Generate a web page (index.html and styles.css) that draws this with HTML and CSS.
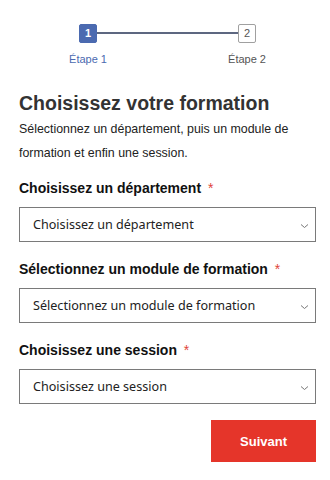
FILE: index.html
```html
<!DOCTYPE html>
<html lang="fr">
<head>
<meta charset="utf-8">
<link rel="stylesheet" href="styles.css">
</head>
<body>
<div class="page">
  <div class="stepper">
    <div class="step active">
      <div class="box">1</div>
      <div class="lbl">Étape 1</div>
    </div>
    <div class="line"></div>
    <div class="step">
      <div class="box">2</div>
      <div class="lbl">Étape 2</div>
    </div>
  </div>
  <h1 class="title">Choisissez votre formation</h1>
  <p class="intro">Sélectionnez un département, puis un module de formation et enfin une session.</p>

  <div class="field first">
    <label class="label">Choisissez un département <span class="req">*</span></label>
    <div class="select"><span>Choisissez un département</span><svg class="chev" width="9" height="6" viewBox="0 0 9 6"><path d="M1 1.5 L4.5 4.5 L8 1.5" fill="none" stroke="#777" stroke-width="1"/></svg></div>
  </div>
  <div class="field">
    <label class="label">Sélectionnez un module de formation <span class="req">*</span></label>
    <div class="select"><span>Sélectionnez un module de formation</span><svg class="chev" width="9" height="6" viewBox="0 0 9 6"><path d="M1 1.5 L4.5 4.5 L8 1.5" fill="none" stroke="#777" stroke-width="1"/></svg></div>
  </div>
  <div class="field">
    <label class="label">Choisissez une session <span class="req">*</span></label>
    <div class="select"><span>Choisissez une session</span><svg class="chev" width="9" height="6" viewBox="0 0 9 6"><path d="M1 1.5 L4.5 4.5 L8 1.5" fill="none" stroke="#777" stroke-width="1"/></svg></div>
  </div>
  <div class="actions">
    <button class="btn">Suivant</button>
  </div>
</div>
</body>
</html>
```
FILE: styles.css
```css
html, body { margin: 0; padding: 0; background: #fff; }
body { font-family: "Liberation Sans", Arial, sans-serif; color: #333; }
.page { padding: 24px 14px 0 19px; }
.stepper { display: flex; align-items: flex-start; padding-left: 60px; padding-right: 60px; }
.step { display: flex; flex-direction: column; align-items: center; width: 18px; }
.box { width: 16px; height: 17px; border: 1px solid #a0a0a0; border-radius: 2px; box-sizing: content-box; font-size: 11px; line-height: 17px; text-align: center; color: #555; background: #fff; }
.step.active .box { background: #4b6ab0; border-color: #4b6ab0; color: #fff; font-weight: bold; }
.lbl { margin-top: 10px; font-size: 11px; white-space: nowrap; color: #555; }
.step.active .lbl { color: #4b6ab0; }
.line { flex: 1; height: 2px; background: #5d6780; margin-top: 8px; }
.title { margin: 26px 0 0; font-size: 19.5px; font-weight: bold; color: #333; line-height: 24px; }
.intro { margin: 2px 0 0; font-size: 12.4px; line-height: 24px; color: #222; }
.field { margin-top: 19px; }
.field.first { margin-top: 15px; }
.label { display: block; font-size: 14px; font-weight: bold; color: #111; line-height: 16px; }
.req { color: #e0443a; font-weight: normal; margin-left: 3px; }
.select { margin-top: 11px; height: 33px; border: 1px solid #7a7a7a; display: flex; align-items: center; justify-content: space-between; padding: 0 6px 0 13px; font-family: "Noto Sans", "Open Sans", sans-serif; font-size: 12.6px; color: #222; }
.chev { margin-top: 2px; }
.actions { display: flex; justify-content: flex-end; margin-top: 16px; }
.btn { width: 105px; height: 42px; background: #e5352a; color: #fff; border: none; font-family: "Liberation Sans", Arial, sans-serif; font-size: 13px; font-weight: bold; }
```
